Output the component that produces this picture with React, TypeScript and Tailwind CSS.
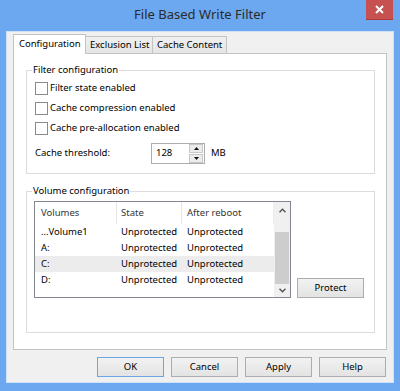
import React from "react";

const Chevron = ({ dir }: { dir: "up" | "down" }) => (
  <svg width="7" height="5" viewBox="0 0 7 5">
    <polyline
      points={dir === "up" ? "0.5,4.2 3.5,1.2 6.5,4.2" : "0.5,0.8 3.5,3.8 6.5,0.8"}
      fill="none"
      stroke="#505050"
      strokeWidth="1.3"
    />
  </svg>
);

const Tri = ({ dir }: { dir: "up" | "down" }) => (
  <svg width="5" height="3" viewBox="0 0 5 3">
    <polygon points={dir === "up" ? "0,3 2.5,0 5,3" : "0,0 2.5,3 5,0"} fill="#111" />
  </svg>
);

function Checkbox({ label, h }: { label: string; h: string }) {
  return (
    <div className={`flex items-center gap-[2px] ${h}`}>
      <div className="w-[13px] h-[13px] border border-[#8a8a8a] bg-white" />
      <span>{label}</span>
    </div>
  );
}

function Group({
  title,
  className,
  children,
}: {
  title: string;
  className: string;
  children: React.ReactNode;
}) {
  return (
    <div className={`relative border border-[#dcdcdc] ${className}`}>
      <span className="absolute left-[5px] top-[-7px] bg-white px-[1px] leading-[12px]">
        {title}
      </span>
      {children}
    </div>
  );
}

function Btn({ label, def }: { label: string; def?: boolean }) {
  return (
    <div
      className={`w-[67px] h-[20px] flex items-center justify-center border bg-gradient-to-b from-[#f2f2f2] to-[#e3e3e3] ${
        def ? "border-[#6aa6e4]" : "border-[#adadad]"
      }`}
    >
      {label}
    </div>
  );
}

const rows = [
  { v: "…Volume1", sel: false },
  { v: "A:", sel: false },
  { v: "C:", sel: true },
  { v: "D:", sel: false },
];

export default function App() {
  return (
    <div className="w-[400px] h-[391px] bg-[#6ca8ef] flex flex-col overflow-hidden font-['Noto_Sans',sans-serif] text-[9.5px] text-black">
      {/* Title bar */}
      <div className="h-[31px] shrink-0 grid grid-cols-[1fr_auto_1fr] items-start">
        <div />
        <div className="pt-[5px] text-[13px] leading-[18px] text-[#2b2b2b]">File Based Write Filter</div>
        <div className="flex justify-end pr-[7px]">
          <div className="w-[27px] h-[20px] bg-[#c75050] border-b border-[#b03a3a] flex items-center justify-center">
            <svg width="9" height="9" viewBox="0 0 9 9">
              <path d="M1 1 L8 8 M8 1 L1 8" stroke="white" strokeWidth="2" />
            </svg>
          </div>
        </div>
      </div>

      {/* Client area */}
      <div className="mx-[6px] mb-[8px] flex-1 border border-[#cfe2f8] bg-[#f0f0f0] flex flex-col pl-[6px] pr-[7px] pt-[2px]">
        {/* Tabs */}
        <div className="flex items-end h-[19px]">
          <div className="relative z-10 w-[73px] h-[20px] -mb-px border border-b-0 border-[#c3c3c3] bg-white flex items-center pl-[5px] pb-[1px]">
            Configuration
          </div>
          <div className="w-[67px] h-[17px] border border-l-0 border-b-0 border-[#c3c3c3] bg-gradient-to-b from-[#f0f0f0] to-[#e5e5e5] flex items-center pl-[4px]">
            Exclusion List
          </div>
          <div className="w-[74px] h-[17px] border border-l-0 border-b-0 border-[#c3c3c3] bg-gradient-to-b from-[#f0f0f0] to-[#e5e5e5] flex items-center pl-[4px]">
            Cache Content
          </div>
        </div>

        {/* Panel */}
        <div className="w-[374px] h-[297px] border border-[#c3c3c3] bg-white flex flex-col pl-[12px] pt-[16px]">
          <Group title="Filter configuration" className="w-[349px] h-[104px] pl-[8px] pt-[7px]">
            <Checkbox label="Filter state enabled" h="h-[20px]" />
            <Checkbox label="Cache compression enabled" h="h-[20px]" />
            <Checkbox label="Cache pre-allocation enabled" h="h-[21px]" />
            <div className="flex items-center mt-[4px] h-[21px]">
              <span className="w-[116px]">Cache threshold:</span>
              <div className="w-[54px] h-[21px] border border-[#abadb3] bg-white flex items-center">
                <span className="flex-1 pl-[4px]">128</span>
                <div className="flex flex-col gap-[1px] mr-[1px] w-[14px]">
                  <div className="h-[9px] border border-[#c8c8c8] bg-[#ececec] flex items-center justify-center">
                    <Tri dir="up" />
                  </div>
                  <div className="h-[9px] border border-[#c8c8c8] bg-[#ececec] flex items-center justify-center">
                    <Tri dir="down" />
                  </div>
                </div>
              </div>
              <span className="ml-[6px]">MB</span>
            </div>
          </Group>

          <Group title="Volume configuration" className="mt-[17px] w-[349px] h-[142px] pl-[7px] pt-[9px]">
            <div className="flex items-end">
              <div className="w-[257px] h-[97px] border border-[#828790] bg-white flex">
                <div className="flex-1 flex flex-col">
                  <div className="h-[22px] flex text-[#333]">
                    <div className="w-[82px] border-r border-[#e5e5e5] flex items-center pl-[6px]">Volumes</div>
                    <div className="w-[65px] border-r border-[#e5e5e5] flex items-center pl-[4px]">State</div>
                    <div className="flex-1 border-r border-[#e8eef6] flex items-center pl-[5px]">After reboot</div>
                  </div>
                  {rows.map((r) => (
                    <div key={r.v} className={`h-[16px] flex items-center ${r.sel ? "bg-[#ececec]" : ""}`}>
                      <div className="w-[82px] pl-[6px]">{r.v}</div>
                      <div className="w-[65px] pl-[4px]">Unprotected</div>
                      <div className="flex-1 pl-[5px]">Unprotected</div>
                    </div>
                  ))}
                </div>
                <div className="w-[16px] bg-[#f0f0f0] flex flex-col">
                  <div className="h-[16px] flex items-center justify-center">
                    <Chevron dir="up" />
                  </div>
                  <div className="h-[14px]" />
                  <div className="h-[52px] mx-[1px] bg-[#cdcdcd]" />
                  <div className="flex-1 flex items-center justify-center">
                    <Chevron dir="down" />
                  </div>
                </div>
              </div>
              <div className="ml-[6px]">
                <Btn label="Protect" />
              </div>
            </div>
          </Group>
        </div>

        {/* Buttons */}
        <div className="mt-[7px] flex justify-end gap-[7px]">
          <Btn label="OK" def />
          <Btn label="Cancel" />
          <Btn label="Apply" />
          <Btn label="Help" />
        </div>
      </div>
    </div>
  );
}
